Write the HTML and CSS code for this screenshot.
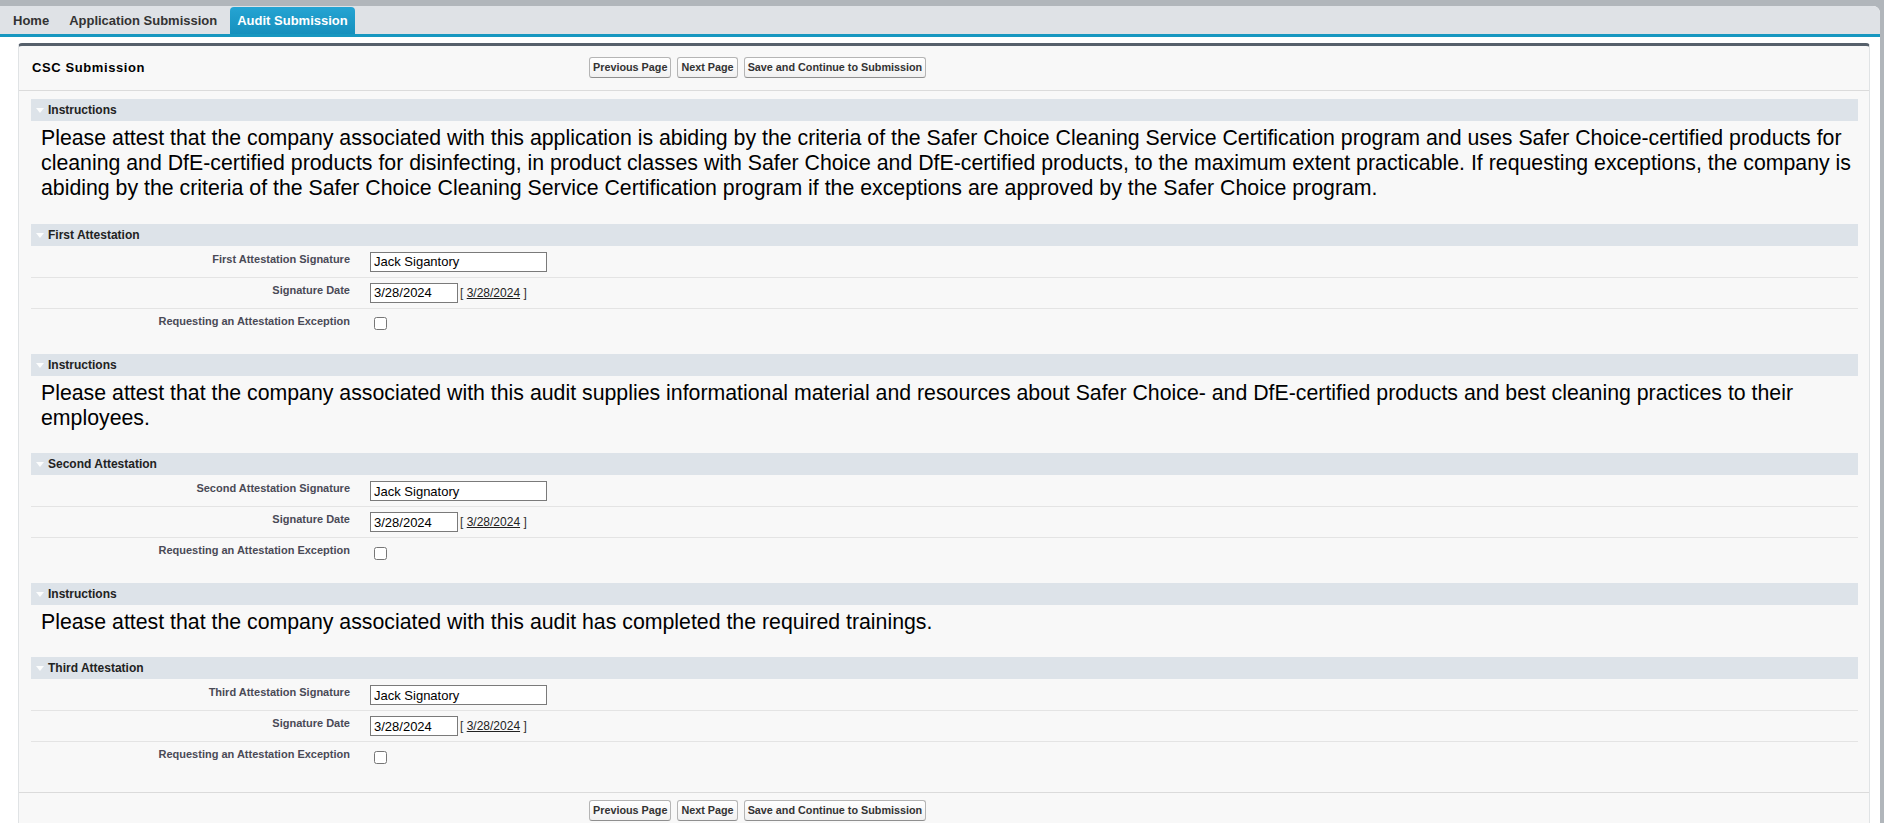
FILE: index.html
```html
<!DOCTYPE html>
<html lang="en">
<head>
<meta charset="utf-8">
<title>CSC Submission</title>
<link rel="stylesheet" href="styles.css">
</head>
<body>
<div class="window">
  <nav class="tabs">
    <span class="tab">Home</span>
    <span class="tab">Application Submission</span>
    <span class="tab active">Audit Submission</span>
  </nav>

  <div class="panel">
    <div class="pb-header">
      <h2 class="pb-title">CSC Submission</h2>
      <div class="pb-buttons">
        <button class="btn">Previous Page</button>
        <button class="btn">Next Page</button>
        <button class="btn">Save and Continue to Submission</button>
      </div>
    </div>

    <div class="pb-body">
      <div class="subheader"><span class="twisty"></span>Instructions</div>
      <div class="instructions">Please attest that the company associated with this application is abiding by the criteria of the Safer Choice Cleaning Service Certification program and uses Safer Choice-certified products for cleaning and DfE-certified products for disinfecting, in product classes with Safer Choice and DfE-certified products, to the maximum extent practicable. If requesting exceptions, the company is abiding by the criteria of the Safer Choice Cleaning Service Certification program if the exceptions are approved by the Safer Choice program.</div>

      <div class="subheader"><span class="twisty"></span>First Attestation</div>
      <div class="detail-list">
        <div class="row">
          <div class="label">First Attestation Signature</div>
          <div class="data"><input class="text-input" type="text" value="Jack Sigantory"></div>
        </div>
        <div class="row">
          <div class="label">Signature Date</div>
          <div class="data"><input class="text-input date-input" type="text" value="3/28/2024"><span class="date-format">[&nbsp;<a class="date-link" href="#">3/28/2024</a>&nbsp;]</span></div>
        </div>
        <div class="row">
          <div class="label">Requesting an Attestation Exception</div>
          <div class="data"><input class="checkbox" type="checkbox"></div>
        </div>
      </div>

      <div class="subheader"><span class="twisty"></span>Instructions</div>
      <div class="instructions">Please attest that the company associated with this audit supplies informational material and resources about Safer Choice- and DfE-certified products and best cleaning practices to their employees.</div>

      <div class="subheader"><span class="twisty"></span>Second Attestation</div>
      <div class="detail-list">
        <div class="row">
          <div class="label">Second Attestation Signature</div>
          <div class="data"><input class="text-input" type="text" value="Jack Signatory"></div>
        </div>
        <div class="row">
          <div class="label">Signature Date</div>
          <div class="data"><input class="text-input date-input" type="text" value="3/28/2024"><span class="date-format">[&nbsp;<a class="date-link" href="#">3/28/2024</a>&nbsp;]</span></div>
        </div>
        <div class="row">
          <div class="label">Requesting an Attestation Exception</div>
          <div class="data"><input class="checkbox" type="checkbox"></div>
        </div>
      </div>

      <div class="subheader"><span class="twisty"></span>Instructions</div>
      <div class="instructions">Please attest that the company associated with this audit has completed the required trainings.</div>

      <div class="subheader"><span class="twisty"></span>Third Attestation</div>
      <div class="detail-list last">
        <div class="row">
          <div class="label">Third Attestation Signature</div>
          <div class="data"><input class="text-input" type="text" value="Jack Signatory"></div>
        </div>
        <div class="row">
          <div class="label">Signature Date</div>
          <div class="data"><input class="text-input date-input" type="text" value="3/28/2024"><span class="date-format">[&nbsp;<a class="date-link" href="#">3/28/2024</a>&nbsp;]</span></div>
        </div>
        <div class="row">
          <div class="label">Requesting an Attestation Exception</div>
          <div class="data"><input class="checkbox" type="checkbox"></div>
        </div>
      </div>
    </div>

    <div class="pb-bottom">
      <button class="btn">Previous Page</button>
      <button class="btn">Next Page</button>
      <button class="btn">Save and Continue to Submission</button>
    </div>
  </div>
</div>
</body>
</html>
```

FILE: styles.css
```css
html, body {
  margin: 0;
  padding: 0;
}

body {
  background: #b1b6bb;
  font-family: "Liberation Sans", Arial, sans-serif;
  color: #000;
  height: 823px;
  overflow: hidden;
}

.window {
  margin: 6px 4px 0 0;
  background: #ffffff;
  border-top-right-radius: 7px;
  min-height: 900px;
  overflow: hidden;
}

/* ---------- tabs ---------- */
.tabs {
  display: flex;
  gap: 6px;
  height: 28px;
  padding-left: 6px;
  background: #dfe2e6;
  border-bottom: 3px solid #1797c0;
  box-sizing: content-box;
}

.tab {
  display: block;
  padding: 0 7px;
  margin-top: 1px;
  height: 27px;
  line-height: 27px;
  font-size: 13px;
  font-weight: bold;
  color: #333;
  border-radius: 4px 4px 0 0;
}

.tab.active {
  color: #fff;
  background: linear-gradient(#25a4d3, #1690bd);
}

/* ---------- panel ---------- */
.panel {
  margin: 6px 10px 0 18px;
  background: #f8f8f8;
  border: 1px solid #e0e3e5;
  border-top: 3px solid #56606b;
  border-radius: 4px 4px 0 0;
}

.pb-header {
  display: flex;
  align-items: flex-start;
  height: 44px;
  padding-left: 13px;
  border-bottom: 1px solid #dbdbdb;
}

.pb-title {
  margin: 0;
  width: 557px;
  flex: none;
  font-size: 13px;
  font-weight: bold;
  letter-spacing: 0.6px;
  line-height: 44px;
  color: #000;
}

.pb-buttons {
  display: flex;
  gap: 6px;
  padding-top: 11px;
}

.btn {
  height: 21px;
  padding: 0 3px;
  margin: 0;
  font-family: "Liberation Sans", Arial, sans-serif;
  font-size: 10.8px;
  font-weight: bold;
  color: #333;
  background: linear-gradient(#ffffff, #f1f1f1);
  border: 1px solid #b5b5b5;
  border-bottom-color: #8f8f8f;
  border-radius: 3px;
  line-height: 19px;
}

.pb-body {
  padding: 8px 11px 20px 12px;
}

.subheader {
  height: 22px;
  line-height: 22px;
  background: #dde3e9;
  font-size: 12px;
  font-weight: bold;
  color: #222;
}

.twisty {
  display: inline-block;
  width: 0;
  height: 0;
  border-left: 4.5px solid transparent;
  border-right: 4.5px solid transparent;
  border-top: 5px solid rgba(255, 255, 255, 0.9);
  margin: 0 4px 0 5px;
  vertical-align: 1px;
}

.instructions {
  font-size: 21.3px;
  line-height: 25.2px;
  padding: 5px 0 22px 10px;
  color: #000;
}

.detail-list {
  margin-bottom: 15px;
}

.detail-list.last {
  margin-bottom: 0;
}

.row {
  display: grid;
  grid-template-columns: 329px 1fr;
  padding: 5px 0;
  border-bottom: 1px solid #e4e4e4;
}

.row:first-child {
  padding-top: 6px;
}

.row:last-child {
  border-bottom: none;
}

.label {
  text-align: right;
  padding-right: 10px;
  font-size: 11px;
  line-height: 14px;
  font-weight: bold;
  color: #4a4a56;
}

.data {
  padding-left: 10px;
  display: flex;
  align-items: center;
  gap: 2px;
  min-height: 20px;
}

.text-input {
  width: 177px;
  height: 20px;
  box-sizing: border-box;
  margin: 0;
  padding: 0 3px;
  border: 1px solid #7a7a7a;
  background: #fff;
  font-family: "Liberation Sans", Arial, sans-serif;
  font-size: 13px;
  color: #000;
}

.date-input {
  width: 88px;
}

.date-format {
  font-size: 12px;
  color: #333;
}

.date-link {
  color: #222;
  text-decoration: underline;
}

.checkbox {
  display: block;
  width: 13px;
  height: 13px;
  margin: 3px 0 3px 4px;
}

.pb-bottom {
  display: flex;
  gap: 6px;
  padding: 7px 0 10px 570px;
  border-top: 1px solid #dbdbdb;
}
```
